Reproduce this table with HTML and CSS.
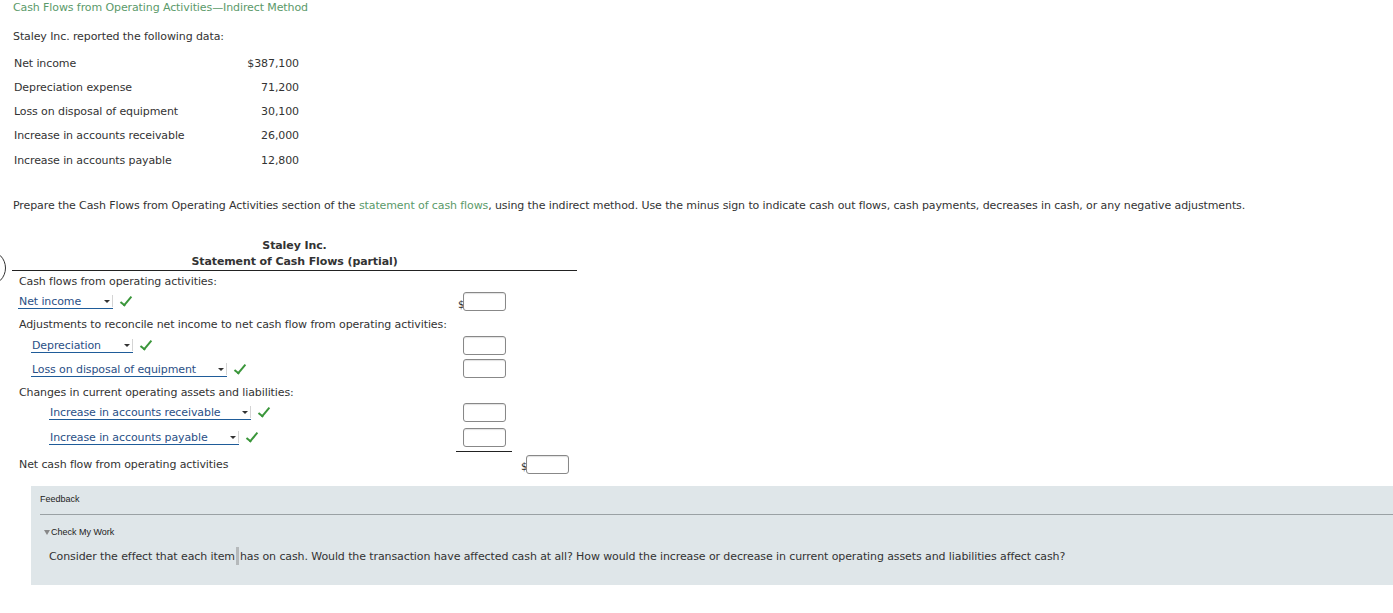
FILE: index.html
```html
<!doctype html>
<html lang="en">
<head>
  <meta charset="UTF-8">
  <title>Cash Flows from Operating Activities</title>
  <link rel="stylesheet" href="styles.css">
</head>
<body>
<div class="page">
  <div class="title">Cash Flows from Operating Activities&mdash;Indirect Method</div>
  <p class="intro">Staley Inc. reported the following data:</p>

  <table class="data">
    <tr><td>Net income</td><td class="num">$387,100</td></tr>
    <tr><td>Depreciation expense</td><td class="num">71,200</td></tr>
    <tr><td>Loss on disposal of equipment</td><td class="num">30,100</td></tr>
    <tr><td>Increase in accounts receivable</td><td class="num">26,000</td></tr>
    <tr><td>Increase in accounts payable</td><td class="num">12,800</td></tr>
  </table>

  <p class="prompt">Prepare the Cash Flows from Operating Activities section of the <span class="link">statement of cash flows</span>, using the indirect method. Use the minus sign to indicate cash out flows, cash payments, decreases in cash, or any negative adjustments.</p>

  <div class="statement">
    <div class="ring"></div>
    <div class="head">
      <div>Staley Inc.</div>
      <div>Statement of Cash Flows (partial)</div>
    </div>

    <div class="row h21">
      <div class="lbl in0 low1">Cash flows from operating activities:</div>
      <div class="c1"></div><div class="c2"></div>
    </div>
    <div class="row h21">
      <div class="lbl in0"><span class="sel w95">Net income<i class="arr"></i></span><span class="ok"></span></div>
      <div class="c1"><span class="dol">$</span><span class="box"></span></div><div class="c2"></div>
    </div>
    <div class="row h23">
      <div class="lbl in0 low1">Adjustments to reconcile net income to net cash flow from operating activities:</div>
      <div class="c1"></div><div class="c2"></div>
    </div>
    <div class="row h21">
      <div class="lbl in1"><span class="sel w102">Depreciation<i class="arr"></i></span><span class="ok"></span></div>
      <div class="c1"><span class="box"></span></div><div class="c2"></div>
    </div>
    <div class="row h25">
      <div class="lbl in1 low1"><span class="sel w196">Loss on disposal of equipment<i class="arr"></i></span><span class="ok"></span></div>
      <div class="c1"><span class="box"></span></div><div class="c2"></div>
    </div>
    <div class="row h22">
      <div class="lbl in0">Changes in current operating assets and liabilities:</div>
      <div class="c1"></div><div class="c2"></div>
    </div>
    <div class="row h18">
      <div class="lbl in2 low1"><span class="sel w202">Increase in accounts receivable<i class="arr"></i></span><span class="ok"></span></div>
      <div class="c1"><span class="box"></span></div><div class="c2"></div>
    </div>
    <div class="row h30">
      <div class="lbl in2 low2"><span class="sel w190">Increase in accounts payable<i class="arr"></i></span><span class="ok"></span></div>
      <div class="c1 total"><span class="box"></span></div><div class="c2"></div>
    </div>
    <div class="row h26">
      <div class="lbl in0">Net cash flow from operating activities</div>
      <div class="c1"></div><div class="c2"><span class="dol">$</span><span class="box"></span></div>
    </div>
  </div>

  <div class="feedback">
    <div class="fb-title">Feedback</div>
    <div class="fb-body">
      <div class="fb-toggle"><span class="tri"></span>Check My Work</div>
      <p class="fb-text">Consider the effect that each item<span class="caret"></span>has on cash. Would the transaction have affected cash at all? How would the increase or decrease in current operating assets and liabilities affect cash?</p>
    </div>
  </div>
</div>
</body>
</html>
```

FILE: styles.css
```css
body {
  margin: 0;
  font-family: "DejaVu Sans", Verdana, sans-serif;
  font-size: 11px;
  letter-spacing: -0.1px;
  color: #333;
  background: #fff;
}
.page {
  padding: 1px 0 0 13px;
  overflow: hidden;
}
.title {
  color: #5b9a6a;
  line-height: 13px;
}
.intro {
  margin: 16px 0 0;
  line-height: 13px;
}
.data {
  border-collapse: collapse;
  margin: 8px 0 0 1px;
}
.data td {
  padding: 0;
  height: 24.25px;
  line-height: 13px;
  width: 228px;
}
.data td.num {
  width: 57px;
  text-align: right;
}
.prompt {
  margin: 27px 0 0;
  line-height: 13px;
}
.link {
  color: #5b9a6a;
}

/* statement */
.statement {
  position: relative;
  width: 565px;
  margin: 26px 0 0 -1px;
}
.ring {
  position: absolute;
  left: -42px;
  top: 12px;
  width: 34px;
  height: 34px;
  border: 1.5px solid #333;
  border-radius: 50%;
}
.head {
  text-align: center;
  font-weight: bold;
  line-height: 16px;
  border-bottom: 1px solid #222;
}
.row {
  display: grid;
  grid-template-columns: 444px 56px 65px;
  align-items: center;
}
.h18 { height: 18px; }
.h21 { height: 21px; }
.h22 { height: 22px; }
.h23 { height: 23px; }
.h25 { height: 25px; }
.h26 { height: 26px; }
.h30 { height: 30px; }
.lbl {
  display: flex;
  align-items: center;
  white-space: nowrap;
  line-height: 13px;
  margin-top: -2px;
}
.lbl.low1 { margin-top: 0; }
.lbl.low2 { margin-top: 2px; }
.in0 { padding-left: 7px; }
.in1 { padding-left: 19px; }
.in2 { padding-left: 37px; }
.in0 .sel { margin-left: -1px; }
.c1, .c2 {
  display: flex;
  align-items: center;
  height: 100%;
}
.c1 { padding-left: 7px; }
.c2 { padding-left: 14px; }
.c1.total {
  border-bottom: 1px solid #222;
  box-sizing: border-box;
  padding-top: 3px;
}
.dol {
  width: 5px;
  margin-left: -5px;
  margin-top: 4px;
  font-size: 10px;
  line-height: 10px;
  color: #333;
  overflow: hidden;
}
.box {
  display: inline-block;
  box-sizing: border-box;
  width: 43px;
  height: 19px;
  margin-top: -2px;
  border: 1px solid #888;
  border-radius: 3px;
  background: #fff;
  box-shadow: inset 0 1px 1px rgba(0,0,0,0.12);
}
.sel {
  position: relative;
  display: inline-block;
  box-sizing: border-box;
  height: 14px;
  line-height: 13px;
  padding-left: 1px;
  color: #2a4f86;
  border-bottom: 1px solid #1f5c99;
}
.w95 { width: 95px; }
.w102 { width: 102px; }
.w196 { width: 196px; }
.w202 { width: 202px; }
.w190 { width: 190px; }
.arr {
  position: absolute;
  right: 0;
  top: 0;
  height: 12px;
  width: 8px;
  border-right: 1px solid #d4d4d4;
}
.arr::after {
  content: "";
  position: absolute;
  left: 0;
  top: 5px;
  border-left: 3px solid transparent;
  border-right: 3px solid transparent;
  border-top: 3px solid #333;
}
.ok {
  display: inline-block;
  width: 12px;
  height: 12px;
  margin-left: 6px;
  position: relative;
}
.ok::after {
  content: "";
  position: absolute;
  left: 4px;
  top: -2px;
  width: 4px;
  height: 10px;
  border-right: 2.5px solid #3a963a;
  border-bottom: 2.5px solid #3a963a;
  transform: rotate(40deg);
}

/* feedback */
.feedback {
  margin: 8px 0 0 18px;
  background: #dfe6e9;
  height: 99px;
  padding: 0 0 0 9px;
}
.fb-title {
  font-family: "Liberation Sans", Arial, sans-serif;
  font-size: 9px;
  letter-spacing: 0;
  padding-top: 8px;
  height: 20px;
  line-height: 11px;
  color: #222;
  border-bottom: 1px solid #9aa1a4;
}
.fb-body {
  padding: 12px 0 0 4px;
}
.fb-toggle {
  font-family: "Liberation Sans", Arial, sans-serif;
  font-size: 9px;
  letter-spacing: 0;
  line-height: 11px;
  color: #222;
  display: flex;
  align-items: center;
}
.tri {
  display: inline-block;
  margin-right: 1px;
  border-left: 3px solid transparent;
  border-right: 3px solid transparent;
  border-top: 5px solid #888;
}
.fb-text {
  margin: 9px 0 0 5px;
  line-height: 14px;
  white-space: nowrap;
}
.caret {
  display: inline-block;
  width: 3px;
  height: 18px;
  margin: 0 1px;
  vertical-align: -5px;
  background: #b5b9bb;
}
```
